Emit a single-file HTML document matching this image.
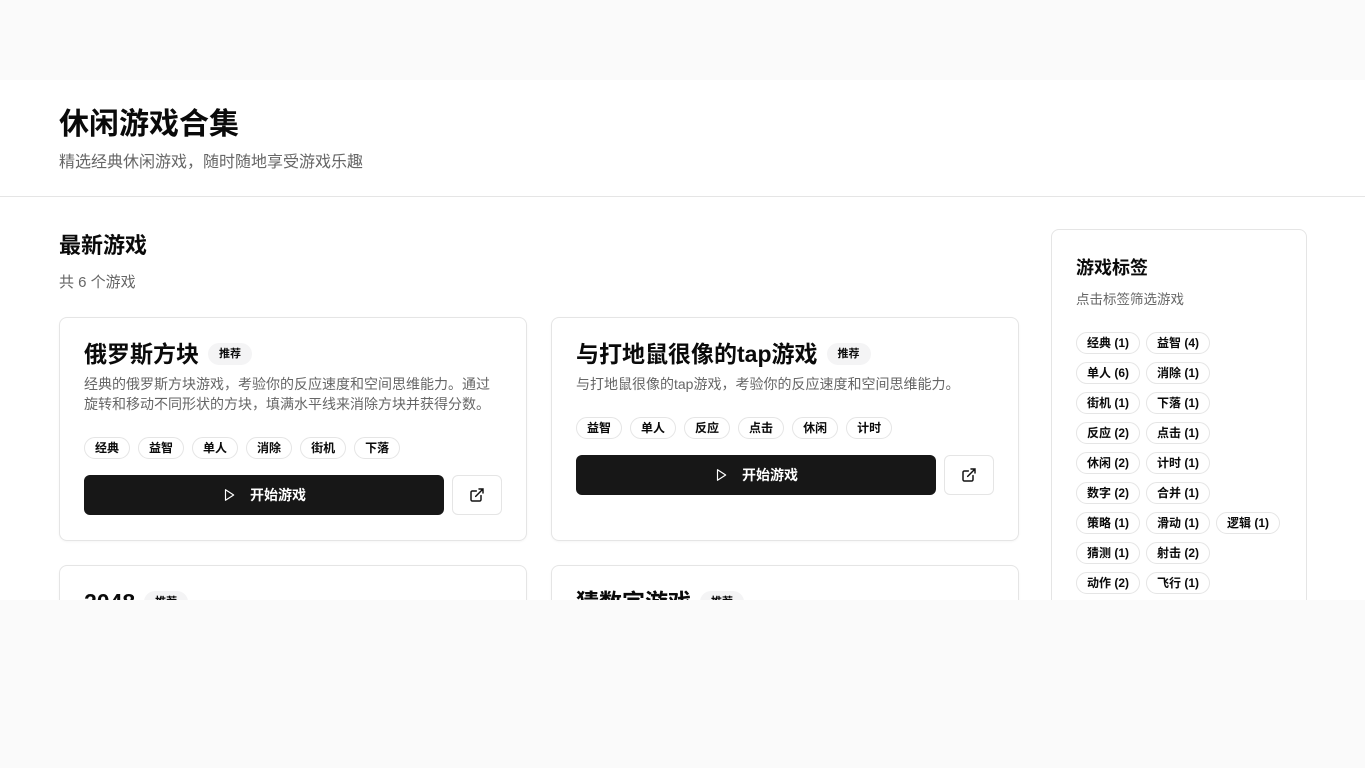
<!DOCTYPE html>
<html><head><meta charset="utf-8"><style>
*{box-sizing:border-box;margin:0;padding:0}
body{width:1365px;height:768px;background:#fafafa;font-family:"Liberation Sans","Noto Sans CJK SC",sans-serif;color:#0a0a0a;overflow:hidden;position:relative}
.wrap{position:absolute;top:80px;left:0;width:1365px;height:520px;background:#fff;overflow:hidden}
.hdr{height:117px;border-bottom:1px solid #e5e5e5;padding:26px 59px 0}
.hdr h1{font-size:30px;font-weight:700;line-height:38px}
.hdr p{font-size:16px;color:#666;margin-top:7px;line-height:24px}
.main{position:absolute;left:59px;top:151px;width:960px}
.main h2{font-size:22px;font-weight:700;line-height:30px}
.cnt{font-size:15px;color:#666;margin-top:11px;line-height:22px}
.grid{display:grid;grid-template-columns:468px 468px;gap:24px;margin-top:23px}
.card{border:1px solid #e5e5e5;border-radius:8px;padding:21px 24px 24px;height:224px;box-shadow:0 1px 2px rgba(0,0,0,.04)}
.t{display:flex;align-items:center;font-size:23px;font-weight:700;line-height:30px}
.badge{font-size:11px;font-weight:700;background:#f4f4f5;border-radius:11px;padding:0 11px;height:22px;line-height:22px;margin-left:9px}
.d{font-size:14px;color:#666;line-height:20px;margin-top:5px;padding-right:8px}
.tags{display:flex;gap:8px;margin-top:23px}
.tg{font-size:12px;font-weight:700;border:1px solid #e5e5e5;border-radius:11px;height:22px;line-height:20px;padding:0 10px;white-space:nowrap}
.btns{display:flex;gap:8px;margin-top:16px}
.play{width:360px;height:40px;background:#171717;border-radius:6px;color:#fff;font-size:14px;font-weight:700;display:flex;align-items:center;justify-content:center;gap:14px}
.ext{width:50px;height:40px;border:1px solid #e5e5e5;border-radius:6px;display:flex;align-items:center;justify-content:center}
.side{position:absolute;left:1051px;top:149px;width:256px;height:420px;border:1px solid #e5e5e5;border-radius:8px;padding:25px 24px 24px}
.side h3{font-size:18px;font-weight:700;line-height:26px}
.side p{font-size:13.5px;color:#666;margin-top:9px;line-height:20px}
.st{display:flex;flex-wrap:wrap;gap:8px 6px;margin-top:22px;width:212px}
.st .tg{padding:0 10px}
</style></head><body>
<div class="wrap">
<div class="hdr"><h1>休闲游戏合集</h1><p>精选经典休闲游戏，随时随地享受游戏乐趣</p></div>
<div class="main">
<h2>最新游戏</h2><div class="cnt">共 6 个游戏</div>
<div class="grid">
<div class="card"><div class="t">俄罗斯方块<span class="badge">推荐</span></div>
<div class="d">经典的俄罗斯方块游戏，考验你的反应速度和空间思维能力。通过旋转和移动不同形状的方块，填满水平线来消除方块并获得分数。</div>
<div class="tags"><span class="tg">经典</span><span class="tg">益智</span><span class="tg">单人</span><span class="tg">消除</span><span class="tg">街机</span><span class="tg">下落</span></div>
<div class="btns"><div class="play"><svg width="14" height="14" viewBox="0 0 24 24" fill="none" stroke="#fff" stroke-width="2" stroke-linejoin="round"><path d="M6 3l14 9-14 9z"/></svg>开始游戏</div><div class="ext"><svg width="16" height="16" viewBox="0 0 24 24" fill="none" stroke="#111" stroke-width="2.2" stroke-linecap="round"><path d="M15 3h6v6M10 14L21 3M18 13v6a2 2 0 0 1-2 2H5a2 2 0 0 1-2-2V8a2 2 0 0 1 2-2h6"/></svg></div></div></div>
<div class="card"><div class="t">与打地鼠很像的tap游戏<span class="badge">推荐</span></div>
<div class="d">与打地鼠很像的tap游戏，考验你的反应速度和空间思维能力。</div>
<div class="tags"><span class="tg">益智</span><span class="tg">单人</span><span class="tg">反应</span><span class="tg">点击</span><span class="tg">休闲</span><span class="tg">计时</span></div>
<div class="btns"><div class="play"><svg width="14" height="14" viewBox="0 0 24 24" fill="none" stroke="#fff" stroke-width="2" stroke-linejoin="round"><path d="M6 3l14 9-14 9z"/></svg>开始游戏</div><div class="ext"><svg width="16" height="16" viewBox="0 0 24 24" fill="none" stroke="#111" stroke-width="2.2" stroke-linecap="round"><path d="M15 3h6v6M10 14L21 3M18 13v6a2 2 0 0 1-2 2H5a2 2 0 0 1-2-2V8a2 2 0 0 1 2-2h6"/></svg></div></div></div>
<div class="card"><div class="t">2048<span class="badge">推荐</span></div></div>
<div class="card"><div class="t">猜数字游戏<span class="badge">推荐</span></div></div>
</div></div>
<div class="side"><h3>游戏标签</h3><p>点击标签筛选游戏</p>
<div class="st">
<span class="tg">经典 (1)</span><span class="tg">益智 (4)</span><span style="width:60px"></span>
<span class="tg">单人 (6)</span><span class="tg">消除 (1)</span><span style="width:60px"></span>
<span class="tg">街机 (1)</span><span class="tg">下落 (1)</span><span style="width:60px"></span>
<span class="tg">反应 (2)</span><span class="tg">点击 (1)</span><span style="width:60px"></span>
<span class="tg">休闲 (2)</span><span class="tg">计时 (1)</span><span style="width:60px"></span>
<span class="tg">数字 (2)</span><span class="tg">合并 (1)</span><span style="width:60px"></span>
<span class="tg">策略 (1)</span><span class="tg">滑动 (1)</span><span class="tg">逻辑 (1)</span>
<span class="tg">猜测 (1)</span><span class="tg">射击 (2)</span><span style="width:60px"></span>
<span class="tg">动作 (2)</span><span class="tg">飞行 (1)</span>
</div></div>
</div>
</body></html>
